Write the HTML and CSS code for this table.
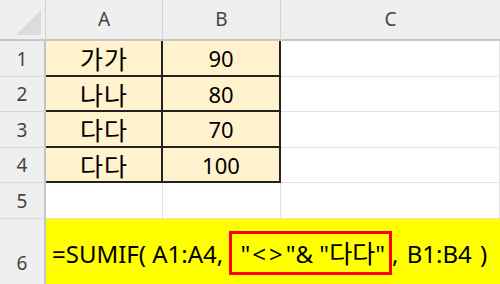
FILE: index.html
```html
<!DOCTYPE html>
<html lang="ko">
<head>
<meta charset="utf-8">
<link rel="stylesheet" href="styles.css">
</head>
<body>
<div class="sheet">
  <div class="corner"><span class="tri"></span></div>
  <div class="colhead">A</div>
  <div class="colhead">B</div>
  <div class="colhead last">C</div>

  <div class="rowhead">1</div>
  <div class="cell data ko">가가</div>
  <div class="cell data">90</div>
  <div class="cell empty"></div>

  <div class="rowhead">2</div>
  <div class="cell data ko">나나</div>
  <div class="cell data">80</div>
  <div class="cell empty"></div>

  <div class="rowhead">3</div>
  <div class="cell data ko">다다</div>
  <div class="cell data">70</div>
  <div class="cell empty"></div>

  <div class="rowhead">4</div>
  <div class="cell data ko">다다</div>
  <div class="cell data">100</div>
  <div class="cell empty"></div>

  <div class="rowhead">5</div>
  <div class="cell empty"></div>
  <div class="cell empty"></div>
  <div class="cell empty"></div>

  <div class="rowhead bottom">6</div>
  <div class="formula">=SUMIF( A1:A4, <span class="box">"<span class="op">&lt;&gt;</span>"&amp; "<span class="kf">다다</span>"</span><span class="tail">, B1:B4 )</span></div>
</div>
</body>
</html>
```

FILE: styles.css
```css
* { box-sizing: border-box; }
html, body { margin: 0; padding: 0; background: #ffffff; }
body {
  width: 500px;
  height: 284px;
  overflow: hidden;
  font-family: "Noto Sans", "Noto Sans CJK KR", sans-serif;
}
.sheet {
  display: grid;
  grid-template-columns: 46px 117px 118px 1fr;
  grid-template-rows: 41px 36px 35px 36px 35px 36px 70px;
}
.corner {
  background: #efefef;
  border-right: 1px solid #d4d4d4;
  border-bottom: 2px solid #c8c8c8;
  display: flex;
  align-items: flex-end;
  justify-content: flex-end;
  padding: 0 4px 4px 0;
}
.tri {
  width: 25px;
  height: 25px;
  background: #dcdcdc;
  clip-path: polygon(100% 0, 100% 100%, 0 100%);
}
.colhead {
  background: #efefef;
  border-right: 1px solid #d4d4d4;
  border-bottom: 2px solid #c8c8c8;
  color: #444444;
  font-family: "Noto Sans", sans-serif;
  font-size: 19px;
  display: flex;
  align-items: center;
  justify-content: center;
  padding-bottom: 2px;
}
.colhead.last { border-right: none; }
.rowhead {
  background: #efefef;
  border-right: 2px solid #c4c4c4;
  border-bottom: 1px solid #d8d8d8;
  color: #444444;
  font-family: "Noto Sans", sans-serif;
  font-size: 19px;
  display: flex;
  align-items: center;
  justify-content: center;
}
.rowhead.bottom {
  align-items: flex-end;
  padding-bottom: 13px;
  border-bottom: none;
}
.cell {
  border-right: 1px solid #e1e1e1;
  border-bottom: 1px solid #e1e1e1;
}
.data {
  background: #fff2cc;
  border-right: 2px solid #222222;
  border-bottom: 2px solid #222222;
  font-size: 22px;
  color: #000000;
  display: flex;
  align-items: center;
  justify-content: center;
  font-family: "Noto Sans", sans-serif;
}
.ko {
  font-family: "Noto Sans CJK KR", sans-serif;
  font-size: 25px;
  letter-spacing: 1px;
  padding-left: 1px;
}
.empty { background: #ffffff; }
.formula {
  grid-column: 2 / 5;
  background: #ffff00;
  font-size: 24px;
  color: #000000;
  white-space: pre;
  padding: 12px 0 0 6px;
  font-family: "Noto Sans", "Noto Sans CJK KR", sans-serif;
}
.box {
  display: inline-block;
  border: 3px solid #ff0000;
  padding: 0 4px 0 8px;
  line-height: 36px;
}
.op {
  letter-spacing: 3px;
  padding-left: 2px;
}
.kf {
  font-family: "Noto Sans CJK KR", sans-serif;
  font-size: 25px;
}
.tail { word-spacing: 2px; }
```
